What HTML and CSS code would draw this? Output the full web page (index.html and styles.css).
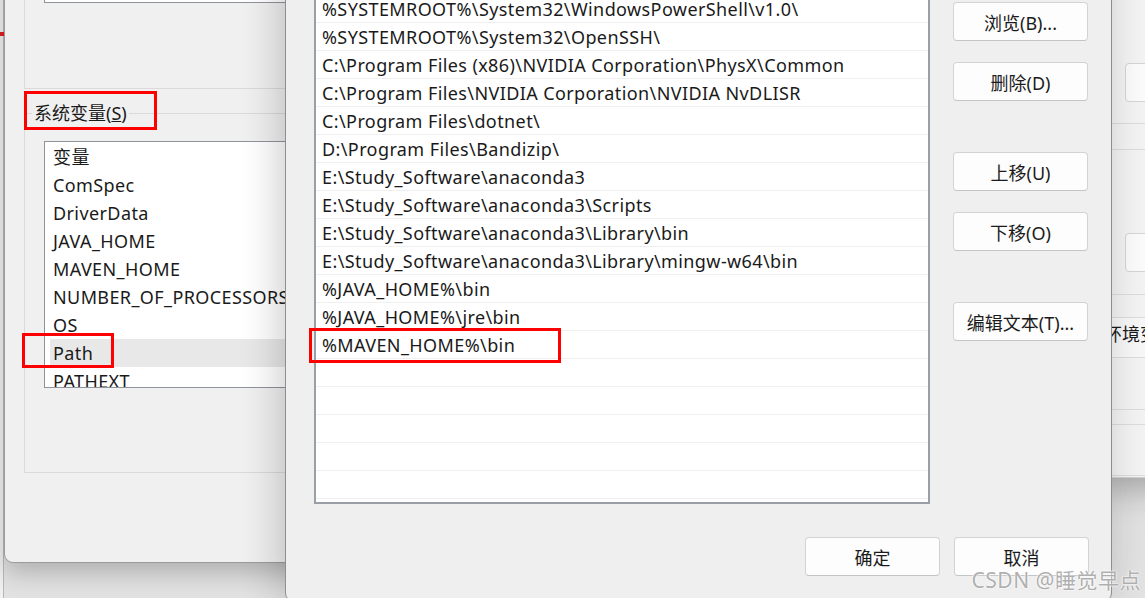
FILE: index.html
```html
<!DOCTYPE html>
<html>
<head>
    <meta charset="UTF-8">
    <title>编辑环境变量</title>
    <link rel="stylesheet" href="styles.css">
</head>
<body>
<div class="desktop">
    <div class="window back-left">
        <div class="bl-mark"></div>
    </div>

    <div class="window back-right">
        <div class="br-btn"></div>
        <div class="br-band"></div>
        <div class="br-btn br-btn-low"></div>
        <div class="br-line"></div>
        <div class="br-row">环境变量</div>
        <div class="br-line br-line-pair"></div>
        <div class="br-row br-row-last">确</div>
    </div>

    <div class="window env-dialog">
        <fieldset class="group user-group">
            <div class="varlist user-list"></div>
        </fieldset>
        <fieldset class="group sys-group">
            <legend>系统变量(<u>S</u>)</legend>
            <div class="varlist sys-list">
                <div class="var-row var-head">变量</div>
                <div class="var-row">ComSpec</div>
                <div class="var-row">DriverData</div>
                <div class="var-row">JAVA_HOME</div>
                <div class="var-row">MAVEN_HOME</div>
                <div class="var-row">NUMBER_OF_PROCESSORS</div>
                <div class="var-row">OS</div>
                <div class="var-row selected">Path</div>
                <div class="var-row">PATHEXT</div>
            </div>
        </fieldset>
    </div>

    <div class="window edit-dialog">
        <div class="edit-body">
            <ul class="path-list">
                <li>%SYSTEMROOT%\System32\WindowsPowerShell\v1.0\</li>
                <li>%SYSTEMROOT%\System32\OpenSSH\</li>
                <li>C:\Program Files (x86)\NVIDIA Corporation\PhysX\Common</li>
                <li>C:\Program Files\NVIDIA Corporation\NVIDIA NvDLISR</li>
                <li>C:\Program Files\dotnet\</li>
                <li>D:\Program Files\Bandizip\</li>
                <li>E:\Study_Software\anaconda3</li>
                <li>E:\Study_Software\anaconda3\Scripts</li>
                <li>E:\Study_Software\anaconda3\Library\bin</li>
                <li>E:\Study_Software\anaconda3\Library\mingw-w64\bin</li>
                <li>%JAVA_HOME%\bin</li>
                <li>%JAVA_HOME%\jre\bin</li>
                <li>%MAVEN_HOME%\bin</li>
                <li></li>
                <li></li>
                <li></li>
                <li></li>
                <li></li>
            </ul>
            <div class="side-buttons">
                <button class="btn">浏览(B)...</button>
                <button class="btn">删除(D)</button>
                <button class="btn group-start">上移(U)</button>
                <button class="btn">下移(O)</button>
                <button class="btn group-start">编辑文本(T)...</button>
            </div>
        </div>
        <div class="footer">
            <button class="btn">确定</button>
            <button class="btn">取消</button>
        </div>
    </div>

    <!-- red annotation boxes -->
    <div class="mark mark-group"></div>
    <div class="mark mark-path"></div>
    <div class="mark mark-maven"></div>

    <div class="watermark">CSDN @睡觉早点</div>
</div>
</body>
</html>
```

FILE: styles.css
```css
body {
    margin: 0;
    font-family: "Noto Sans", "Noto Sans CJK SC", sans-serif;
    color: #1a1a1a;
}

.desktop {
    position: relative;
    width: 1145px;
    height: 598px;
    overflow: hidden;
    background: linear-gradient(#d6d6d6, #e2e2e2);
}

.window {
    position: absolute;
    box-sizing: border-box;
    background: #f0f0f0;
}

/* windows peeking out behind */
.back-left {
    left: -200px;
    top: -20px;
    width: 204px;
    height: 640px;
    border-right: 1px solid #b9b9b9;
}

.bl-mark {
    margin: 52px 0 0 196px;
    width: 8px;
    height: 4px;
    background: #e02020;
}

.back-right {
    left: 1095px;
    top: 0;
    width: 120px;
    height: 478px;
    padding-left: 30px;
    background: #f3f3f3;
    border-bottom: 1px solid #cfcfcf;
    box-shadow: 0 12px 30px rgba(0, 0, 0, 0.25);
}

.br-btn {
    margin-top: 63px;
    height: 39px;
    background: #fbfbfb;
    border: 1px solid #d4d4d4;
    border-radius: 4px;
    box-sizing: border-box;
}

.br-btn-low {
    margin-top: 83px;
}

.br-band {
    margin: 21px 0 0 -30px;
    height: 27px;
    box-sizing: border-box;
    border-top: 1px solid #dcdcdc;
    border-bottom: 1px solid #dcdcdc;
}

.br-line {
    margin: 22px 0 0 -30px;
    border-top: 1px solid #dcdcdc;
}

.br-row {
    margin: 22px 0 0 -30px;
    height: 41px;
    box-sizing: border-box;
    border-top: 1px solid #dcdcdc;
    border-bottom: 1px solid #dcdcdc;
    background: #f7f7f7;
    padding-left: 9px;
    font-size: 18px;
    line-height: 32px;
    white-space: nowrap;
}

.br-line-pair {
    margin-top: 51px;
    height: 14px;
    border-bottom: 1px solid #dcdcdc;
}

.br-row-last {
    margin-top: 0;
    height: 51px;
    border-top: 0;
    background: none;
    padding-left: 0;
    text-indent: -7px;
    line-height: 42px;
}

/* 环境变量 dialog (middle) */
.env-dialog {
    left: 4px;
    top: -60px;
    width: 420px;
    height: 623px;
    border: 1px solid #9c9c9c;
    border-radius: 0 0 0 9px;
    padding-left: 19px;
    box-shadow: 0 10px 24px rgba(0, 0, 0, 0.22);
}

.group {
    margin: 0;
    padding: 0;
    min-width: 0;
    border: 1px solid #dadada;
}

.user-group {
    height: 146px;
}

.varlist {
    margin-left: 19px;
    width: 360px;
    box-sizing: border-box;
    background: #fff;
    border: 1px solid #8f939b;
}

.user-list {
    height: 61px;
}

.sys-group {
    margin-top: 12px;
    padding-bottom: 84px;
}

.sys-group legend {
    margin-left: 7px;
    padding: 0 2px;
    font-size: 18px;
    line-height: 24px;
}

.sys-list {
    margin-top: 16px;
    height: 247px;
    padding-top: 1px;
    overflow: hidden;
}

.var-row {
    margin-left: 5px;
    padding-left: 3px;
    height: 28px;
    font-size: 18px;
    line-height: 28px;
    letter-spacing: 0.4px;
    white-space: nowrap;
}

.var-row.selected {
    background: #e8e8e8;
}

/* 编辑环境变量 dialog (front) */
.edit-dialog {
    left: 285px;
    top: -60px;
    width: 827px;
    height: 662px;
    border: 1px solid #8e8e8e;
    border-radius: 0 0 9px 9px;
    padding: 52px 22px 0 28px;
    background: #efefef;
    box-shadow: -6px 0 40px rgba(0, 0, 0, 0.2);
}

.edit-body {
    display: flex;
    gap: 23px;
}

.path-list {
    list-style: none;
    margin: 0;
    padding: 0;
    width: 616px;
    height: 511px;
    box-sizing: border-box;
    background: #fff;
    border: 2px solid #9a9ea6;
    overflow: hidden;
}

.path-list li {
    height: 28px;
    box-sizing: border-box;
    border-bottom: 1px solid #efefef;
    padding-left: 6px;
    font-size: 18px;
    line-height: 28px;
    letter-spacing: 0.4px;
    white-space: nowrap;
}

.side-buttons {
    display: flex;
    flex-direction: column;
    gap: 21px;
    margin-top: 9px;
}

.btn {
    width: 135px;
    height: 39px;
    padding: 0;
    background: #fdfdfd;
    border: 1px solid #d3d3d3;
    border-bottom-color: #c4c4c4;
    border-radius: 4px;
    font-family: inherit;
    font-size: 18px;
    color: #1b1b1b;
}

.side-buttons .group-start {
    margin-top: 30px;
}

.footer {
    display: flex;
    justify-content: flex-end;
    gap: 14px;
    margin-top: 33px;
}

/* annotations */
.mark {
    position: absolute;
    box-sizing: border-box;
    border: 3px solid #f00;
}

.mark-group {
    left: 24px;
    top: 91px;
    width: 133px;
    height: 39px;
}

.mark-path {
    left: 22px;
    top: 333px;
    width: 92px;
    height: 35px;
}

.mark-maven {
    left: 309px;
    top: 328px;
    width: 252px;
    height: 35px;
}

.watermark {
    position: absolute;
    right: 4px;
    bottom: 4px;
    font-size: 21px;
    color: rgba(150, 150, 150, 0.75);
    text-shadow: 0 0 2px #fff, 0 0 2px #fff;
    letter-spacing: 0.5px;
}
```
